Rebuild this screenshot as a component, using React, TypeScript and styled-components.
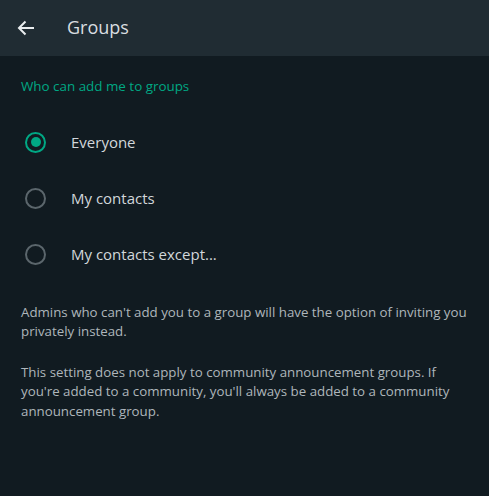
import { useState } from 'react'
import styled, { createGlobalStyle } from 'styled-components'

const GlobalStyle = createGlobalStyle`
  html, body {
    margin: 0;
    padding: 0;
    background: #111b21;
  }
  body {
    font-family: 'Open Sans', 'Noto Sans', sans-serif;
  }
`

const Page = styled.div`
  width: 489px;
  height: 496px;
  background: #111b21;
  display: flex;
  flex-direction: column;
`

const Header = styled.header`
  height: 56px;
  background: #202c33;
  display: flex;
  align-items: center;
  padding: 0 0 0 17px;
  gap: 32px;
  flex-shrink: 0;
`

const BackButton = styled.button`
  width: 18px;
  height: 18px;
  padding: 0;
  border: 0;
  background: none;
  color: #e9edef;
  display: flex;
  align-items: center;
  justify-content: center;
  cursor: pointer;
`

const Title = styled.h1`
  margin: 0 0 2px;
  font-size: 18px;
  font-weight: 400;
  color: #d9dee0;
`

const Body = styled.div`
  padding: 20px 21px 0;
`

const SectionTitle = styled.div`
  font-size: 13.4px;
  color: #00a884;
  line-height: 20px;
  margin-bottom: 18px;
`

const Options = styled.div`
  display: flex;
  flex-direction: column;
`

const Option = styled.label`
  height: 56px;
  display: flex;
  align-items: center;
  gap: 25px;
  padding-left: 4px;
  cursor: pointer;
`

const Radio = styled.span<{ $checked: boolean }>`
  width: 21px;
  height: 21px;
  box-sizing: border-box;
  border-radius: 50%;
  border: 2px solid ${(p) => (p.$checked ? '#00a884' : '#5b666c')};
  display: flex;
  align-items: center;
  justify-content: center;

  &::after {
    content: '';
    width: 10px;
    height: 10px;
    border-radius: 50%;
    background: #00a884;
    display: ${(p) => (p.$checked ? 'block' : 'none')};
  }
`

const OptionLabel = styled.span`
  font-size: 15px;
  color: #d1d7db;
`

const Notes = styled.div`
  margin-top: 21px;
  display: flex;
  flex-direction: column;
  gap: 21px;
`

const Note = styled.p`
  margin: 0;
  font-size: 13.3px;
  line-height: 19.4px;
  color: #aeb6bb;
`

const options = ['Everyone', 'My contacts', 'My contacts except...']

export default function App() {
  const [selected, setSelected] = useState(0)

  return (
    <>
      <GlobalStyle />
      <Page>
        <Header>
          <BackButton aria-label='Back'>
            <svg width='18' height='16' viewBox='0 0 18 16' fill='none'>
              <path
                d='M17 8H2M8.5 1.5L2 8l6.5 6.5'
                stroke='currentColor'
                strokeWidth='2'
              />
            </svg>
          </BackButton>
          <Title>Groups</Title>
        </Header>
        <Body>
          <SectionTitle>Who can add me to groups</SectionTitle>
          <Options>
            {options.map((label, i) => (
              <Option key={label} onClick={() => setSelected(i)}>
                <Radio $checked={selected === i} />
                <OptionLabel>{label}</OptionLabel>
              </Option>
            ))}
          </Options>
          <Notes>
            <Note>
              Admins who can't add you to a group will have the option of
              inviting you privately instead.
            </Note>
            <Note>
              This setting does not apply to community announcement groups. If
              you're added to a community, you'll always be added to a community
              announcement group.
            </Note>
          </Notes>
        </Body>
      </Page>
    </>
  )
}
